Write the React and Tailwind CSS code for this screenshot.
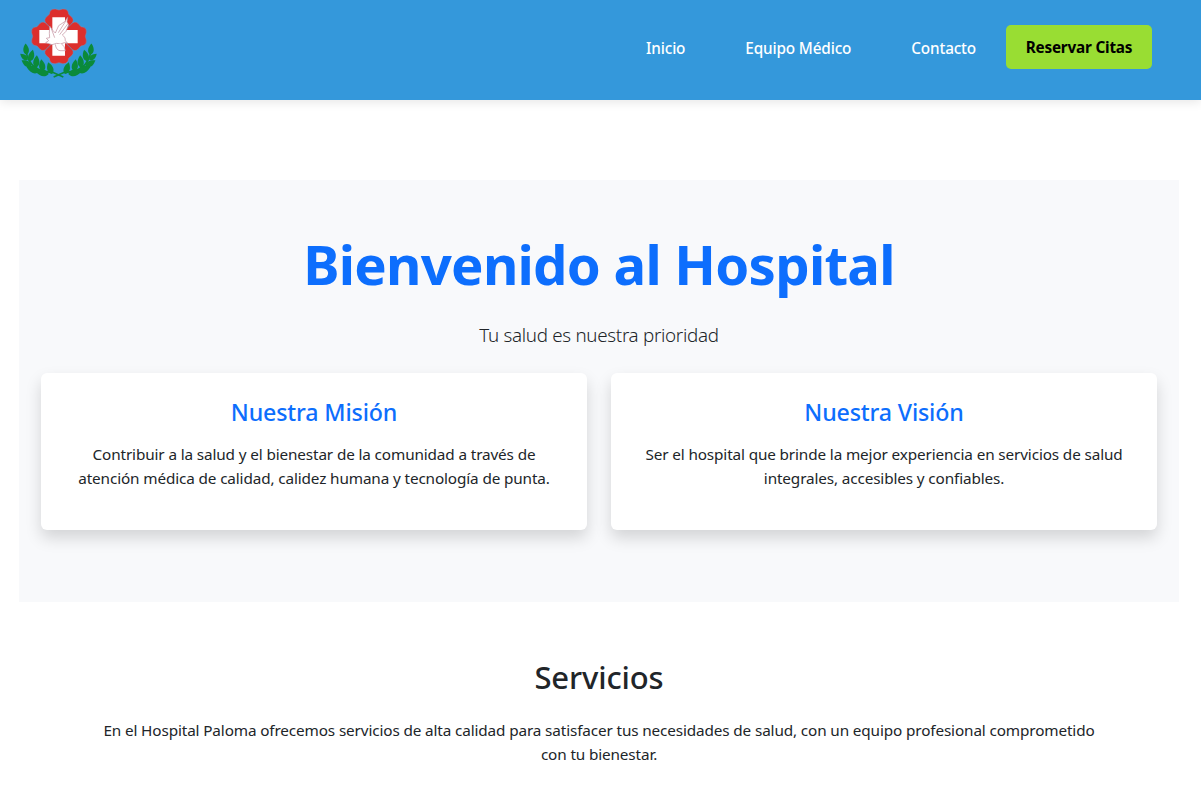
const lobe =
  "M147 109 L112 74 Q99 63 108 52 L118 43 L120 34 Q126 25 136 27 L147 30 L158 27 Q169 25 174 34 L176 43 L186 52 Q195 63 182 74 Z";

const leaf = "M0 0 C-12 -7 -11 -20 0 -34 C11 -20 11 -7 0 0 Z";

const leaves = [
  [50, 164, -6, 1],
  [53, 180, -50, 0.85],
  [60, 184, 14, 1.05],
  [65, 200, -58, 1.05],
  [78, 203, 4, 1.1],
  [88, 215, -70, 1.2],
  [99, 215, -8, 1.1],
  [116, 222, -78, 1.2],
  [126, 222, -18, 1.1],
];

function Branch() {
  return (
    <g>
      <path d="M48 155 Q60 216 128 217 L160 231" fill="none" stroke="#0b8a3a" strokeWidth="5" />
      {leaves.map(([x, y, angle, scale]) => (
        <path key={`${x}-${y}`} d={leaf} transform={`translate(${x} ${y}) rotate(${angle}) scale(${scale})`} />
      ))}
    </g>
  );
}

function Logo() {
  return (
    <svg className="block h-[100px] w-[100px]" viewBox="0 0 300 300" role="img" aria-label="Hospital Paloma">
      <g fill="#0b8a3a">
        <Branch />
        <g transform="translate(291 0) scale(-1 1)">
          <Branch />
        </g>
      </g>
      <g fill="#dc2f2d" stroke="#7b8fb5" strokeWidth="1.5">
        {[0, 90, 180, 270].map((angle) => (
          <path key={angle} d={lobe} transform={`rotate(${angle} 147 109)`} />
        ))}
      </g>
      <path d="M127 52 H165 V90 H203 V130 H165 V167 H127 V130 H88 V90 H127 Z" fill="#fff" />
      <g fill="#fff" stroke="#c08a99" strokeWidth="2" strokeLinejoin="round">
        <path d="M118 100 L119 78 L129 92 L136 99 L146 77 L164 65 L173 52 L171 66 L176 74 L168 94 L157 105 L165 113 L166 122 L172 129 L163 128 Q152 135 140 130 L126 134 L107 128 L116 122 L109 115 L119 113 Z" />
        <path d="M168 62 L145 98 M173 72 L149 104 M124 86 L134 113" fill="none" />
        <path d="M136 133 Q138 150 150 152 L166 152 Q165 139 154 131" />
      </g>
    </svg>
  );
}

const links = ["Inicio", "Equipo Médico", "Contacto"];

function Header() {
  return (
    <header className="flex h-[100px] justify-between bg-[#3498db] pr-[49px] pl-[10px] shadow-[0_2px_10px_rgba(0,0,0,0.1)]">
      <Logo />
      <nav className="flex items-start pt-[25px] text-[15.3px] leading-6 font-medium tracking-[-0.15px] text-white">
        <ul className="flex gap-[60px] pt-[11px] pr-[30px]">
          {links.map((label) => (
            <li key={label}>
              <a href="#">{label}</a>
            </li>
          ))}
        </ul>
        <a
          href="#"
          className="flex h-11 w-[146px] items-center justify-center rounded-[5px] bg-[#99dd33] font-bold tracking-[-0.2px] text-black"
        >
          Reservar Citas
        </a>
      </nav>
    </header>
  );
}

function Card({ title, children }) {
  return (
    <article className="h-[157px] rounded-md bg-white px-6 pt-[25px] text-center shadow-[0_8px_16px_rgba(0,0,0,0.15)]">
      <h2 className="text-[23.2px] leading-[29px] font-medium tracking-[-0.15px] text-[#0d6efd]">{title}</h2>
      <p className="mt-[15px] leading-6">{children}</p>
    </article>
  );
}

export default function App() {
  return (
    <div className="h-[802px] overflow-hidden bg-white font-['Noto_Sans',sans-serif] text-[15.3px] tracking-[-0.13px] text-[#212529]">
      <Header />
      <main className="mt-20 mr-[22px] ml-[19px] text-center">
        <section className="h-[422px] bg-[#f8f9fb] px-[22px] pt-[51px]">
          <h1 className="text-[54.5px] leading-[67px] font-bold tracking-[-0.75px] text-[#0d6efd]">
            Bienvenido al Hospital
          </h1>
          <p className="mt-[22px] text-[18.8px] leading-[30px] font-light tracking-[-0.3px]">
            Tu salud es nuestra prioridad
          </p>
          <div className="mt-[23px] grid grid-cols-2 gap-6">
            <Card title="Nuestra Misión">
              Contribuir a la salud y el bienestar de la comunidad a través de
              <br />
              atención médica de calidad, calidez humana y tecnología de punta.
            </Card>
            <Card title="Nuestra Visión">
              Ser el hospital que brinde la mejor experiencia en servicios de salud
              <br />
              integrales, accesibles y confiables.
            </Card>
          </div>
        </section>
        <section className="px-20 pt-14">
          <h2 className="text-[31px] leading-[38px] font-medium">Servicios</h2>
          <p className="mt-[22px] leading-6">
            En el Hospital Paloma ofrecemos servicios de alta calidad para satisfacer tus necesidades de salud, con un
            equipo profesional comprometido
            <br />
            con tu bienestar.
          </p>
        </section>
      </main>
    </div>
  );
}
